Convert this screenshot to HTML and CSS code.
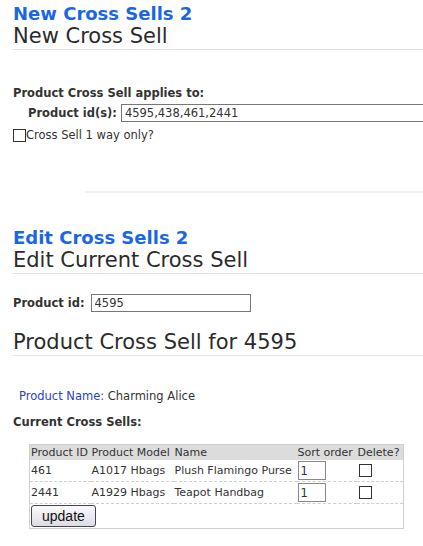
FILE: index.html
```html
<!DOCTYPE html>
<html lang="en">
<head>
    <meta charset="UTF-8">
    <title>Cross Sells</title>
    <link rel="stylesheet" href="styles.css">
</head>
<body>
    <!-- New cross sell -->
    <div class="section">
        <h2 class="section-title">New Cross Sells 2</h2>
        <h1 class="page-title">New Cross Sell</h1>
        <form class="new-form">
            <p class="label">Product Cross Sell applies to:</p>
            <div class="field-row">
                <label class="label">Product id(s):</label>
                <input type="text" class="text-input wide" value="4595,438,461,2441">
            </div>
            <label class="check-row"><input type="checkbox" class="box">Cross Sell 1 way only?</label>
        </form>
        <div class="divider short"></div>
    </div>

    <!-- Edit cross sells -->
    <div class="section edit">
        <h2 class="section-title">Edit Cross Sells 2</h2>
        <h1 class="page-title">Edit Current Cross Sell</h1>
        <div class="id-row">
            <label class="label">Product id:</label>
            <input type="text" class="text-input" value="4595">
        </div>
        <h1 class="page-title for">Product Cross Sell for 4595</h1>

        <p class="product-name"><span class="key">Product Name:</span> Charming Alice</p>
        <p class="label current">Current Cross Sells:</p>

        <table class="cross-table">
            <colgroup>
                <col style="width:61px"><col style="width:83px"><col style="width:123px"><col style="width:60px"><col>
            </colgroup>
            <tr class="head">
                <td>Product ID</td><td>Product Model</td><td>Name</td><td>Sort order</td><td>Delete?</td>
            </tr>
            <tr class="row">
                <td>461</td><td>A1017 Hbags</td><td>Plush Flamingo Purse</td>
                <td><input type="text" class="sort-input" value="1"></td>
                <td><input type="checkbox" class="box del"></td>
            </tr>
            <tr class="row">
                <td>2441</td><td>A1929 Hbags</td><td>Teapot Handbag</td>
                <td><input type="text" class="sort-input" value="1"></td>
                <td><input type="checkbox" class="box del"></td>
            </tr>
            <tr class="foot">
                <td colspan="5"><button class="update-btn">update</button></td>
            </tr>
        </table>
    </div>
</body>
</html>
```

FILE: styles.css
```css
body { margin: 0; font-family: "DejaVu Sans", Verdana, sans-serif; font-size: 11.5px; color: #333; background: #fff; overflow: hidden; }
p { margin: 0; }

.section { padding-left: 13px; }
.section-title { margin: 4px 0 0; font-size: 18px; line-height: 20px; font-weight: bold; color: #1a66e6; }
.page-title { margin: 0; font-size: 21px; line-height: 24px; font-weight: normal; color: #2b2b2b; border-bottom: 1px solid #e2e2e2; padding-bottom: 1px; }

.label { font-weight: bold; color: #333; }
.new-form { padding-top: 36px; }
.field-row { display: flex; align-items: center; gap: 4px; margin: 4px 0 0 15px; }
.text-input { font-family: inherit; font-size: 11.5px; color: #333; border: 1px solid #777; height: 18px; box-sizing: border-box; padding: 0 3px; margin: 0; }
.text-input.wide { flex: 1; border-right: none; }

.check-row { display: flex; align-items: center; margin-top: 6px; }
.box { appearance: none; -webkit-appearance: none; width: 13px; height: 13px; border: 1px solid #333; margin: 0; box-sizing: border-box; background: #fff; }

.divider { border-top: 2px solid #efefef; }
.divider.short { margin: 49px 0 0 72px; }

.edit .section-title { margin-top: 35px; }
.id-row { display: flex; align-items: center; gap: 6px; margin-top: 20px; }
.id-row .text-input { width: 160px; }
.page-title.for { margin-top: 18px; }

.product-name { margin: 33px 0 0 6px; color: #333; }
.product-name .key { color: #2a44b8; }
.current { margin-top: 12px; }

.cross-table { margin: 15px 0 0 16px; width: 375px; table-layout: fixed; border-collapse: collapse; border: 1px solid #cfcfcf; color: #333; font-size: 11px; }
.cross-table td { padding: 0 0 0 1px; white-space: nowrap; overflow: hidden; }
.head td { background: #dcdcdc; height: 15px; line-height: 15px; }
.row td { height: 21px; border-bottom: 1px dashed #cfcfcf; }
.del { margin-left: 1px; vertical-align: middle; }
.sort-input { width: 28px; height: 19px; box-sizing: border-box; border: 1px solid #888; font-family: inherit; font-size: 11.5px; padding: 0 2px; margin: 0; vertical-align: middle; color: #333; }
.foot td { height: 24px; }
.update-btn { font-family: "Liberation Sans", Arial, sans-serif; font-size: 14px; padding: 0 10px; height: 22px; border: 1px solid #445; border-radius: 3px; background: linear-gradient(#fbfbfb, #dcdce4); color: #111; }
```
